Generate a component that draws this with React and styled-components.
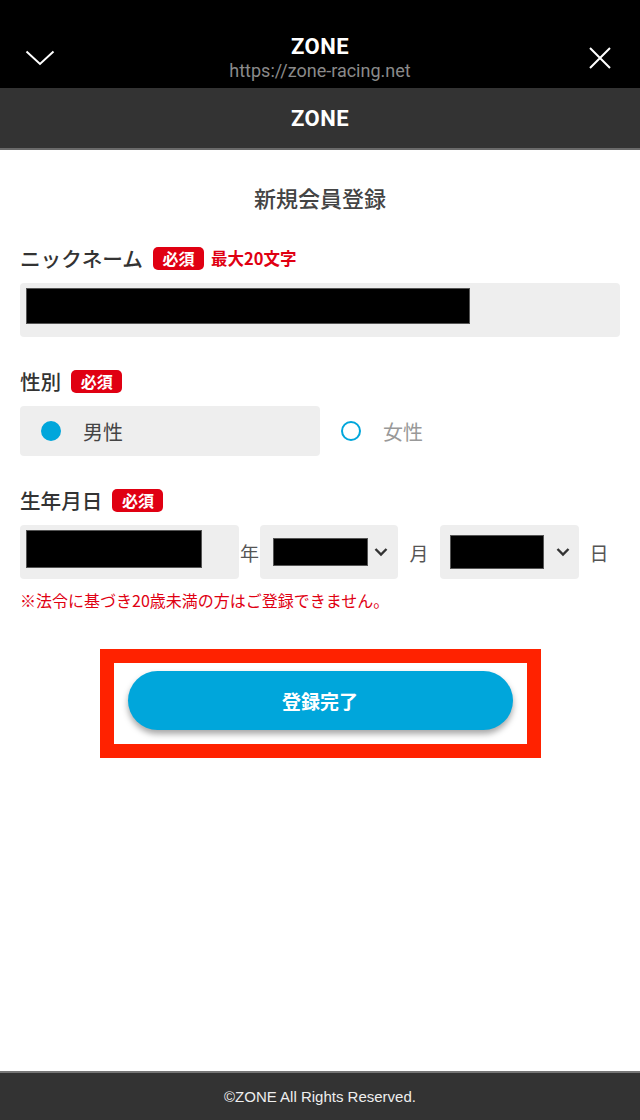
import React from "react";
import styled, { createGlobalStyle } from "styled-components";

const Global = createGlobalStyle`
  html, body { margin: 0; padding: 0; background: #fff; }
  body { font-family: "Noto Sans CJK JP", "Noto Sans", sans-serif; }
  * { box-sizing: border-box; }
`;

const Page = styled.div`
  width: 640px;
  min-height: 1120px;
  display: flex;
  flex-direction: column;
`;

const BrowserBar = styled.header`
  height: 88px;
  background: #000;
  display: grid;
  grid-template-columns: 80px 1fr 80px;
  align-items: center;
  padding-top: 28px;
`;

const BarIcon = styled.div`
  display: flex;
  justify-content: center;
`;

const BarCenter = styled.div`
  display: flex;
  flex-direction: column;
  align-items: center;
`;

const BarTitle = styled.div`
  color: #fff;
  font-family: Roboto, "Liberation Sans", sans-serif;
  font-weight: 700;
  font-size: 22px;
  letter-spacing: 0.5px;
  line-height: 26px;
`;

const BarUrl = styled.div`
  color: #8a8a8a;
  font-family: Roboto, "Liberation Sans", sans-serif;
  font-size: 18px;
  line-height: 22px;
`;

const SiteBar = styled.div`
  height: 62px;
  background: #333;
  border-bottom: 2px solid #6a6a6a;
  display: flex;
  align-items: center;
  justify-content: center;
  color: #fff;
  font-family: Roboto, "Liberation Sans", sans-serif;
  font-weight: 700;
  font-size: 22px;
  letter-spacing: 0.5px;
`;

const Main = styled.main`
  flex: 1;
  padding: 29px 20px 0;
  display: flex;
  flex-direction: column;
`;

const Title = styled.h1`
  margin: 0 0 29px;
  text-align: center;
  font-size: 22px;
  font-weight: 500;
  color: #444;
  line-height: 36px;
`;

const Field = styled.section`
  display: flex;
  flex-direction: column;
  margin-bottom: ${(p) => p.$mb || 0}px;
`;

const LabelRow = styled.div`
  display: flex;
  align-items: center;
  gap: 10px;
  height: 28px;
  margin-bottom: 11px;
`;

const Label = styled.span`
  font-size: 20.6px;
  color: #333;
  font-weight: 500;
`;

const Badge = styled.span`
  background: #e00012;
  color: #fff;
  font-size: 16px;
  font-weight: 700;
  border-radius: 5px;
  padding: 0 9.5px;
  height: 23px;
  line-height: 23px;
  display: inline-block;
`;

const Hint = styled.span`
  color: #e00012;
  font-size: 16.5px;
  font-weight: 700;
  margin-left: -3px;
`;

const InputBox = styled.div`
  background: #eee;
  border-radius: 4px;
  height: 54px;
  width: ${(p) => (p.$w ? `${p.$w}px` : "100%")};
  display: flex;
  align-items: ${(p) => (p.$top ? "flex-start" : "center")};
  padding: ${(p) => (p.$top ? "5px" : "0")} ${(p) => p.$pr || 6}px 0 ${(p) => p.$pl || 6}px;
  flex-shrink: 0;
`;

const Redacted = styled.div`
  background: #000;
  border: 1px solid #555;
  width: ${(p) => p.$w}px;
  height: ${(p) => p.$h}px;
`;

const RadioRow = styled.div`
  display: flex;
`;

const RadioOption = styled.label`
  width: 300px;
  height: 50px;
  border-radius: 4px;
  background: ${(p) => (p.$checked ? "#eee" : "transparent")};
  display: flex;
  align-items: center;
  padding-left: 21px;
  gap: 22px;
  font-size: 20px;
  color: ${(p) => (p.$checked ? "#444" : "#999")};
`;

const Dot = styled.span`
  width: 20px;
  height: 20px;
  border-radius: 50%;
  background: ${(p) => (p.$checked ? "#00a6db" : "transparent")};
  border: 2px solid #00a6db;
`;

const DateRow = styled.div`
  display: flex;
  align-items: center;
`;

const Unit = styled.span`
  font-size: 19px;
  color: #555;
  width: ${(p) => p.$w}px;
  text-align: center;
  flex-shrink: 0;
`;

const Chev = styled.svg`
  margin-left: auto;
  flex-shrink: 0;
`;

const Note = styled.p`
  margin: 11px 0 0;
  color: #e00012;
  font-size: 16px;
  line-height: 20px;
`;

const Highlight = styled.div`
  align-self: center;
  margin-top: 39px;
  width: 441px;
  height: 109px;
  border: 14px solid #ff2200;
  background: #fff;
  padding: 8px 14px 0;
`;

const SubmitButton = styled.button`
  width: 100%;
  height: 59px;
  border: none;
  border-radius: 30px;
  background: #00a6db;
  color: #fff;
  font-family: "Noto Sans CJK JP", sans-serif;
  font-size: 19px;
  font-weight: 700;
  box-shadow: 0 4px 6px rgba(0, 0, 0, 0.35);
  cursor: pointer;
`;

const Footer = styled.footer`
  height: 49px;
  background: #333;
  border-top: 2px solid #777;
  display: flex;
  align-items: center;
  justify-content: center;
  color: #eee;
  font-family: "Liberation Sans", Arial, sans-serif;
  font-size: 15px;
`;

const ChevronDown = () => (
  <Chev width="14" height="10" viewBox="0 0 14 10">
    <path d="M1.5 2 L7 7.5 L12.5 2" fill="none" stroke="#333" strokeWidth="2.4" />
  </Chev>
);

export default function App() {
  return (
    <Page>
      <Global />
      <BrowserBar>
        <BarIcon>
          <svg width="30" height="16" viewBox="0 0 30 16">
            <path d="M1.5 1.5 L15 14 L28.5 1.5" fill="none" stroke="#fff" strokeWidth="2" />
          </svg>
        </BarIcon>
        <BarCenter>
          <BarTitle>ZONE</BarTitle>
          <BarUrl>https://zone-racing.net</BarUrl>
        </BarCenter>
        <BarIcon>
          <svg width="24" height="24" viewBox="0 0 24 24">
            <path d="M2 2 L22 22 M22 2 L2 22" fill="none" stroke="#fff" strokeWidth="2" />
          </svg>
        </BarIcon>
      </BrowserBar>
      <SiteBar>ZONE</SiteBar>
      <Main>
        <Title>新規会員登録</Title>

        <Field $mb={30}>
          <LabelRow>
            <Label>ニックネーム</Label>
            <Badge>必須</Badge>
            <Hint>最大20文字</Hint>
          </LabelRow>
          <InputBox $top>
            <Redacted $w={444} $h={36} />
          </InputBox>
        </Field>

        <Field $mb={30}>
          <LabelRow>
            <Label>性別</Label>
            <Badge>必須</Badge>
          </LabelRow>
          <RadioRow>
            <RadioOption $checked>
              <Dot $checked />
              男性
            </RadioOption>
            <RadioOption>
              <Dot />
              女性
            </RadioOption>
          </RadioRow>
        </Field>

        <Field>
          <LabelRow>
            <Label>生年月日</Label>
            <Badge>必須</Badge>
          </LabelRow>
          <DateRow>
            <InputBox $w={219} $top>
              <Redacted $w={176} $h={38} />
            </InputBox>
            <Unit $w={21}>年</Unit>
            <InputBox $w={138} $pl={13} $pr={10}>
              <Redacted $w={95} $h={28} />
              <ChevronDown />
            </InputBox>
            <Unit $w={42}>月</Unit>
            <InputBox $w={139} $pl={10} $pr={9}>
              <Redacted $w={94} $h={34} />
              <ChevronDown />
            </InputBox>
            <Unit $w={40}>日</Unit>
          </DateRow>
          <Note>※法令に基づき20歳未満の方はご登録できません。</Note>
        </Field>

        <Highlight>
          <SubmitButton>登録完了</SubmitButton>
        </Highlight>
      </Main>
      <Footer>©ZONE All Rights Reserved.</Footer>
    </Page>
  );
}
